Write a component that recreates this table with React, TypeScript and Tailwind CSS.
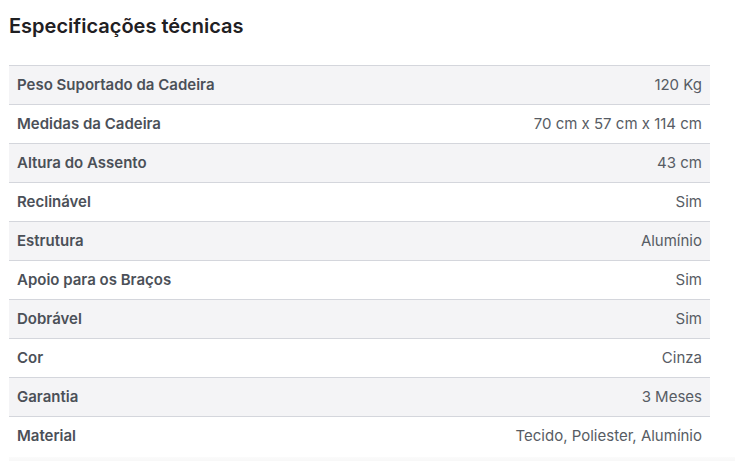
const SPECS = [
  { label: "Peso Suportado da Cadeira", value: "120 Kg" },
  { label: "Medidas da Cadeira", value: "70 cm x 57 cm x 114 cm" },
  { label: "Altura do Assento", value: "43 cm" },
  { label: "Reclinável", value: "Sim" },
  { label: "Estrutura", value: "Alumínio" },
  { label: "Apoio para os Braços", value: "Sim" },
  { label: "Dobrável", value: "Sim" },
  { label: "Cor", value: "Cinza" },
  { label: "Garantia", value: "3 Meses" },
  { label: "Material", value: "Tecido, Poliester, Alumínio" },
];

export default function App() {
  return (
    <div className="h-[461px] w-[735px] overflow-hidden bg-white font-['Inter',sans-serif]">
      <div className="pl-[9px] pt-[12px]">
        <h2 className="text-[20px] font-semibold leading-[28px] text-[#1f2023]">
          Especificações técnicas
        </h2>
      </div>
      <div className="ml-[9px] mt-[25px] w-[701px]">
        {SPECS.map((spec, i) => (
          <div
            key={i}
            className={`flex h-[39px] items-center justify-between border-t border-[#d4d6dc] px-2 pb-px text-[15px] leading-5 ${
              i % 2 === 0 ? "bg-[#f4f4f6]" : "bg-white"
            }`}
          >
            <span className="font-semibold text-[#4b5058]">{spec.label}</span>
            <span className="text-[#575c64]">{spec.value}</span>
          </div>
        ))}
      </div>
      <div className="ml-[9px] mt-[2px] h-[6px] w-[726px] bg-gradient-to-b from-[#fbfbfb] to-[#f6f6f6]" />
    </div>
  );
}
